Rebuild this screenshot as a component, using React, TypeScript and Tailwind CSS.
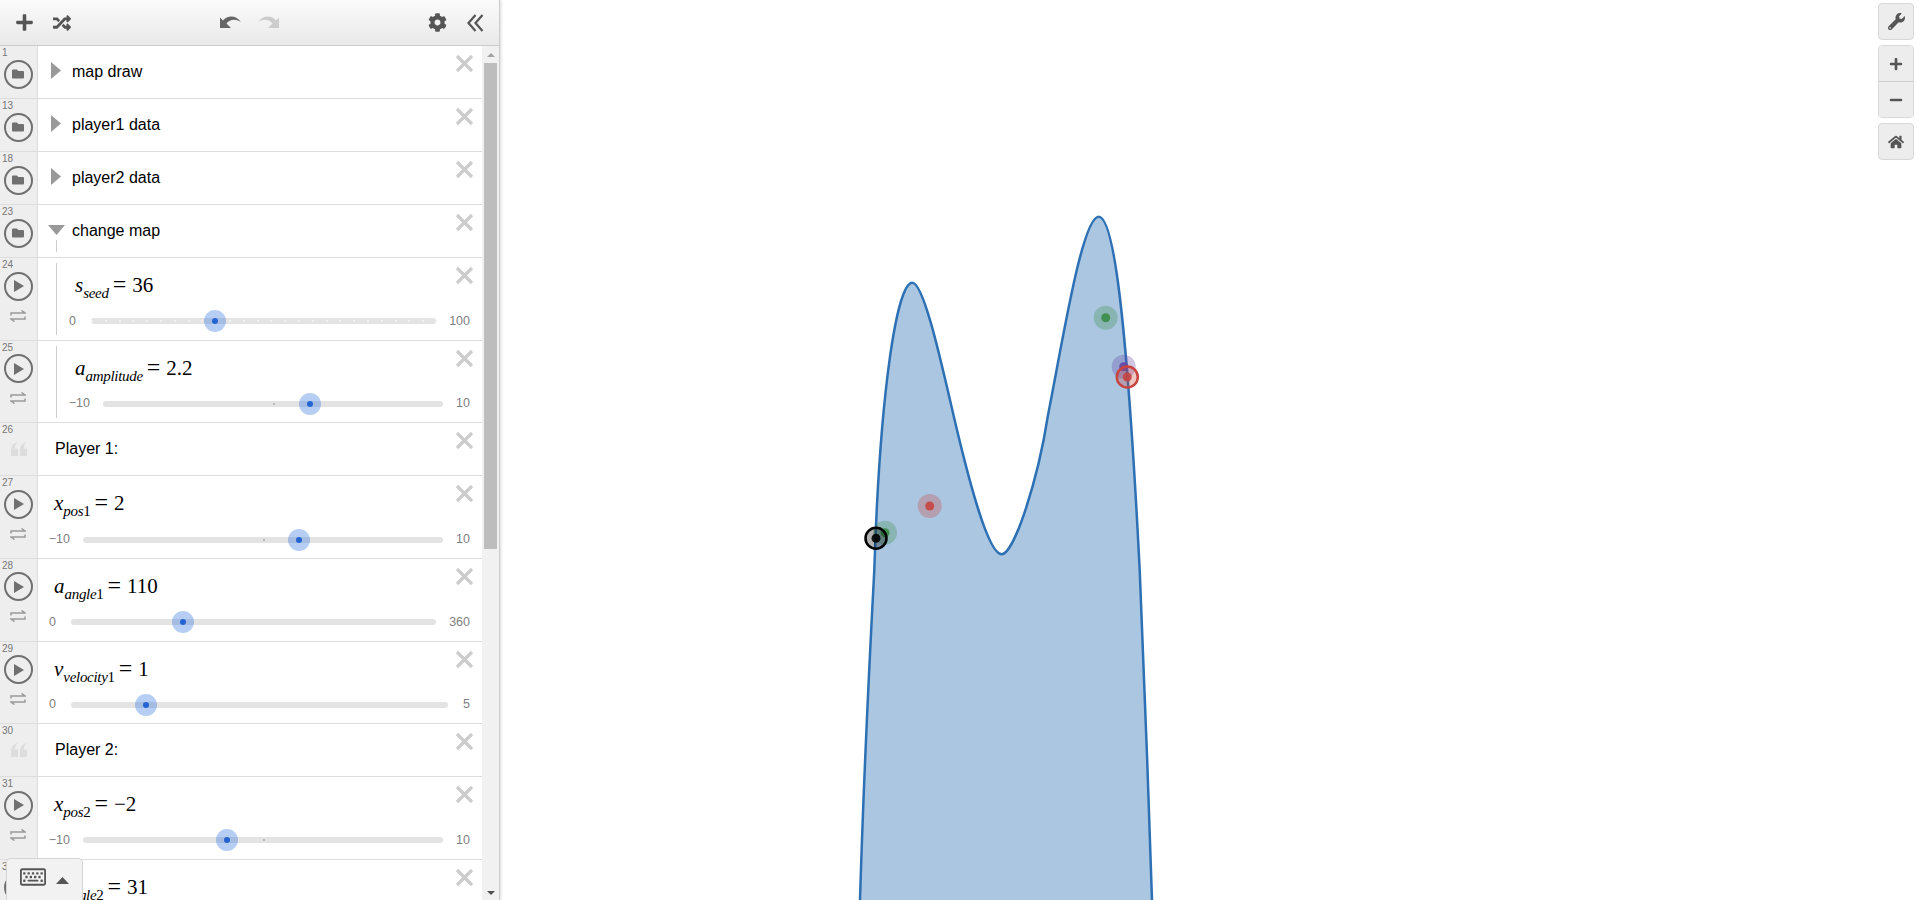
import React from "react";
import { FaPlus, FaRandom, FaCog, FaFolder, FaWrench, FaMinus, FaHome, FaRegKeyboard } from "react-icons/fa";

const curve =
  "M860 900 C863 800 869.500 660 874.300 570 C880 390 897 282.700 912.300 282.700 C925 282.700 945 380 957 430 C969 480 988 554.300 1001.700 554.300 C1014 554.300 1038 480 1048 415 C1062 345 1082 216.700 1098.700 216.700 C1114 216.700 1127 320 1139.700 570 C1143 650 1149 800 1152 900";

function Close() {
  return (
    <svg className="absolute right-[8px] top-[8px]" width="19" height="19" viewBox="0 0 19 19">
      <path d="M2 2L17 17M17 2L2 17" stroke="#cccccc" strokeWidth="3.2" fill="none" />
    </svg>
  );
}

function Repeat() {
  return (
    <svg className="mt-[9px]" width="16" height="12" viewBox="0 0 16 12">
      <path d="M1 5.500V3H15L11.500 .5M15 6.500V9H1L4.500 11.500" stroke="#9a9a9a" strokeWidth="1.500" fill="none" />
    </svg>
  );
}

function Gutter({ n, kind, repeat }: { n: number; kind: "folder" | "play" | "quote"; repeat?: boolean }) {
  return (
    <div className="relative flex w-[38px] shrink-0 flex-col items-center border-r border-[#dddddd] bg-[#eeeeee] pt-[13.500px] pr-[1px]">
      <span className="absolute left-[2px] top-[1px] text-[10px] leading-[12px] text-[#777777]">{n}</span>
      {kind === "quote" ? (
        <svg className="mt-[5px] ml-[1px]" width="16" height="14" viewBox="0 0 16 14">
          <path d="M0 14V8.500C0 4 2.500 1 6.500 0C4.700 2 3.800 4 3.800 6.500H7V14ZM9 14V8.500C9 4 11.500 1 15.500 0C13.700 2 12.800 4 12.800 6.500H16V14Z" fill="#dddddd" />
        </svg>
      ) : (
        <div className="flex h-[29px] w-[29px] items-center justify-center rounded-full border-2 border-[#707070]">
          {kind === "folder" ? (
            <FaFolder className="text-[12px] text-[#707070]" />
          ) : (
            <svg className="ml-[1px]" width="10" height="12" viewBox="0 0 10 12"><path d="M0 0L10 6L0 12Z" fill="#707070" /></svg>
          )}
        </div>
      )}
      {repeat && <Repeat />}
    </div>
  );
}

function FolderRow({ n, label, open }: { n: number; label: string; open?: boolean }) {
  return (
    <div className="relative flex h-[53px] border-b border-[#dddddd] bg-white">
      <Gutter n={n} kind="folder" />
      <div className="flex items-center">
        {open ? (
          <svg className="ml-[10px] mb-[3px]" width="17" height="10" viewBox="0 0 17 10"><path d="M0 0H17L8.500 10Z" fill="#999999" /></svg>
        ) : (
          <svg className="ml-[13px] mb-[3px]" width="10" height="17" viewBox="0 0 10 17"><path d="M0 0L10 8.500L0 17Z" fill="#999999" /></svg>
        )}
        <span className={open ? "ml-[7px] text-[16px] text-black" : "ml-[11px] text-[16px] text-black"}>{label}</span>
      </div>
      {open && <div className="absolute left-[56px] top-[35px] h-[12px] w-px bg-[#cccccc]" />}
      <Close />
    </div>
  );
}

function NoteRow({ n, label }: { n: number; label: string }) {
  return (
    <div className="relative flex h-[53px] border-b border-[#dddddd] bg-white">
      <Gutter n={n} kind="quote" />
      <div className="flex items-center pl-[17px] text-[16px] text-black">{label}</div>
      <Close />
    </div>
  );
}

function Formula({ base, sub, digit, value, className }: { base: string; sub: string; digit?: string; value: string; className: string }) {
  return (
    <div className={`flex items-baseline whitespace-nowrap text-[21px] leading-[28px] text-black [font-family:'Liberation_Serif',serif] ${className}`}>
      <i>{base}</i>
      <span className="relative top-[6px] text-[15px] leading-[14px] tracking-[-0.3px]"><i>{sub}</i>{digit}</span>
      <span className="ml-[4px] mr-[6px] text-[24px] leading-[28px]">=</span>
      <span>{value}</span>
    </div>
  );
}

function Slider({ min, max, pct, zero, ticks, leftBox, rightBox }: {
  min: string; max: string; pct: number; zero?: number; ticks?: boolean; leftBox: string; rightBox: string;
}) {
  return (
    <div className="mt-[12.200px] flex h-[20px] items-center text-[12.500px] text-[#808080]">
      <div className={`shrink-0 text-right ${leftBox}`}>{min}</div>
      <div className="relative h-[6px] flex-1 rounded-full bg-[#e3e3e3]">
        {ticks && Array.from({ length: 26 }).map((_, i) => (
          <span key={i} className="absolute top-[2px] h-[2px] w-[2px] rounded-full bg-[#f7f7f7]" style={{ left: `${i * 4}%` }} />
        ))}
        {zero !== undefined && (
          <span className="absolute top-[2px] h-[2px] w-[2px] rounded-full bg-[#aaaaaa]" style={{ left: `${zero}%` }} />
        )}
        <span className="absolute top-1/2 flex h-[22px] w-[22px] -translate-x-1/2 -translate-y-1/2 items-center justify-center rounded-full bg-[#2f72dc]/35" style={{ left: `${pct}%` }}>
          <span className="h-[6px] w-[6px] rounded-full bg-[#2464d2]" />
        </span>
      </div>
      <div className={`shrink-0 text-right ${rightBox}`}>{max}</div>
    </div>
  );
}

function ExprRow({ n, indent, math, slider }: { n: number; indent?: boolean; math: React.ReactNode; slider: React.ReactNode }) {
  return (
    <div className="relative flex h-[82.660px] border-b border-[#dddddd] bg-white">
      <Gutter n={n} kind="play" repeat />
      <div className="flex-1 pt-[12px]">
        {math}
        {slider}
      </div>
      {indent && <div className="absolute left-[56px] top-[5px] h-[72px] w-px bg-[#cccccc]" />}
      <Close />
    </div>
  );
}

function Dot({ x, y, c }: { x: number; y: number; c: string }) {
  return (
    <g>
      <circle cx={x} cy={y} r="12" fill={c} opacity="0.3" />
      <circle cx={x} cy={y} r="4.500" fill={c} opacity="0.9" />
    </g>
  );
}

function Ring({ x, y, c }: { x: number; y: number; c: string }) {
  return (
    <g>
      <circle cx={x} cy={y} r="10.500" fill={c} fillOpacity="0.3" stroke={c} strokeWidth="2.500" />
      <circle cx={x} cy={y} r="4.500" fill={c} opacity="0.9" />
    </g>
  );
}

const mapBtn = "flex items-center justify-center bg-[#ededed] text-[#555555]";

export default function App() {
  return (
    <div className="flex h-[900px] w-[1920px] overflow-hidden bg-white [font-family:'Liberation_Sans',Arial,sans-serif]">
      <aside className="relative z-10 flex h-[900px] w-[500px] shrink-0 flex-col border-r border-[#cccccc] shadow-[1px_0_3px_rgba(0,0,0,0.15)]">
        <div className="flex h-[46px] shrink-0 items-center border-b border-[#cccccc] bg-gradient-to-b from-[#fbfbfb] to-[#e9e9e9]">
          <FaPlus className="ml-[15px] text-[19px] text-[#555555]" />
          <FaRandom className="ml-[19px] text-[18px] text-[#555555]" />
          <svg className="ml-[149px] mb-[2px]" width="21" height="13" viewBox="0 0 21 13">
            <path d="M0 13V2.500L3 5.500C7 1 15 -1 21 7C15 3.500 10 4.500 6.500 8.500L11 13Z" fill="#666666" />
          </svg>
          <svg className="ml-[17px] mb-[2px]" width="21" height="13" viewBox="0 0 21 13">
            <path d="M21 13V2.500L18 5.500C14 1 6 -1 0 7C6 3.500 11 4.500 14.500 8.500L10 13Z" fill="#cccccc" />
          </svg>
          <FaCog className="ml-[149px] text-[19px] text-[#555555]" />
          <svg className="ml-[20px]" width="17" height="18" viewBox="0 0 17 18">
            <path d="M8.500 1L1.500 9L8.500 17M15.500 1L8.500 9L15.500 17" stroke="#555555" strokeWidth="2.200" fill="none" />
          </svg>
        </div>
        <div className="flex min-h-0 flex-1">
          <div className="w-[482px] shrink-0 overflow-hidden">
            <FolderRow n={1} label="map draw" />
            <FolderRow n={13} label="player1 data" />
            <FolderRow n={18} label="player2 data" />
            <FolderRow n={23} label="change map" open />
            <ExprRow n={24} indent
              math={<Formula base="s" sub="seed" value="36" className="pl-[37px]" />}
              slider={<Slider min="0" max="100" pct={36} ticks leftBox="w-[53px] pr-[15px]" rightBox="w-[46px] pr-[12px]" />} />
            <ExprRow n={25} indent
              math={<Formula base="a" sub="amplitude" value="2.2" className="pl-[37px]" />}
              slider={<Slider min="−10" max="10" pct={61} zero={50} leftBox="w-[65px] pr-[13px]" rightBox="w-[39px] pr-[12px]" />} />
            <NoteRow n={26} label="Player 1:" />
            <ExprRow n={27}
              math={<Formula base="x" sub="pos" digit="1" value="2" className="pl-[16px]" />}
              slider={<Slider min="−10" max="10" pct={60} zero={50} leftBox="w-[45px] pr-[13px]" rightBox="w-[39px] pr-[12px]" />} />
            <ExprRow n={28}
              math={<Formula base="a" sub="angle" digit="1" value="110" className="pl-[16px]" />}
              slider={<Slider min="0" max="360" pct={30.600} leftBox="w-[33px] pr-[15px]" rightBox="w-[46px] pr-[12px]" />} />
            <ExprRow n={29}
              math={<Formula base="v" sub="velocity" digit="1" value="1" className="pl-[16px]" />}
              slider={<Slider min="0" max="5" pct={20} leftBox="w-[33px] pr-[15px]" rightBox="w-[34px] pr-[12px]" />} />
            <NoteRow n={30} label="Player 2:" />
            <ExprRow n={31}
              math={<Formula base="x" sub="pos" digit="2" value="−2" className="pl-[16px]" />}
              slider={<Slider min="−10" max="10" pct={40} zero={50} leftBox="w-[45px] pr-[13px]" rightBox="w-[39px] pr-[12px]" />} />
            <ExprRow n={32}
              math={<Formula base="a" sub="angle" digit="2" value="31" className="pl-[16px]" />}
              slider={<Slider min="0" max="360" pct={8.600} leftBox="w-[33px] pr-[15px]" rightBox="w-[46px] pr-[12px]" />} />
          </div>
          <div className="flex w-[17px] shrink-0 flex-col items-center bg-[#f1f1f1]">
            <svg className="mt-[7px]" width="8" height="4" viewBox="0 0 8 4"><path d="M4 0L8 4H0Z" fill="#a3a3a3" /></svg>
            <div className="mt-[6px] h-[486px] w-[13px] bg-[#bdbdbd]" />
            <svg className="mt-auto mb-[5px]" width="8" height="4" viewBox="0 0 8 4"><path d="M0 0H8L4 4Z" fill="#505050" /></svg>
          </div>
        </div>
        <div className="absolute bottom-0 left-[6px] flex h-[42px] w-[77px] items-start gap-[10px] rounded-t-[5px] border border-b-0 border-[#d4d4d4] bg-[#f2f2f2] pl-[13px] pt-[5px]">
          <FaRegKeyboard className="text-[26px] text-[#555555]" />
          <svg className="mt-[13px]" width="13" height="7" viewBox="0 0 13 7"><path d="M6.500 0L13 7H0Z" fill="#555555" /></svg>
        </div>
      </aside>
      <main className="relative flex-1">
        <svg className="block h-full w-full" viewBox="500 0 1420 900">
          <path d={`${curve} Z`} fill="#2d70b3" fillOpacity="0.4" stroke="none" />
          <path d={curve} fill="none" stroke="#2d70b3" strokeWidth="2.500" />
          <Dot x={885} y={532.700} c="#388c46" />
          <Dot x={929.700} y={506} c="#c74440" />
          <Dot x={1105.700} y={317.700} c="#388c46" />
          <Dot x={1123.700} y={366.700} c="#6042a6" />
          <Ring x={876} y={538.300} c="#000000" />
          <Ring x={1127.300} y={377} c="#c74440" />
        </svg>
        <div className="absolute right-[6px] top-[3px] flex w-[36px] flex-col gap-[5px]">
          <div className={`h-[37px] rounded-[4px] border border-[#d8d8d8] text-[17px] ${mapBtn}`}><FaWrench /></div>
          <div className="flex h-[73px] flex-col overflow-hidden rounded-[4px] border border-[#d8d8d8]">
            <div className={`h-[36px] border-b border-[#cfcfcf] text-[14px] ${mapBtn}`}><FaPlus /></div>
            <div className={`flex-1 text-[14px] ${mapBtn}`}><FaMinus /></div>
          </div>
          <div className={`h-[37px] rounded-[4px] border border-[#d8d8d8] text-[16px] ${mapBtn}`}><FaHome /></div>
        </div>
      </main>
    </div>
  );
}
